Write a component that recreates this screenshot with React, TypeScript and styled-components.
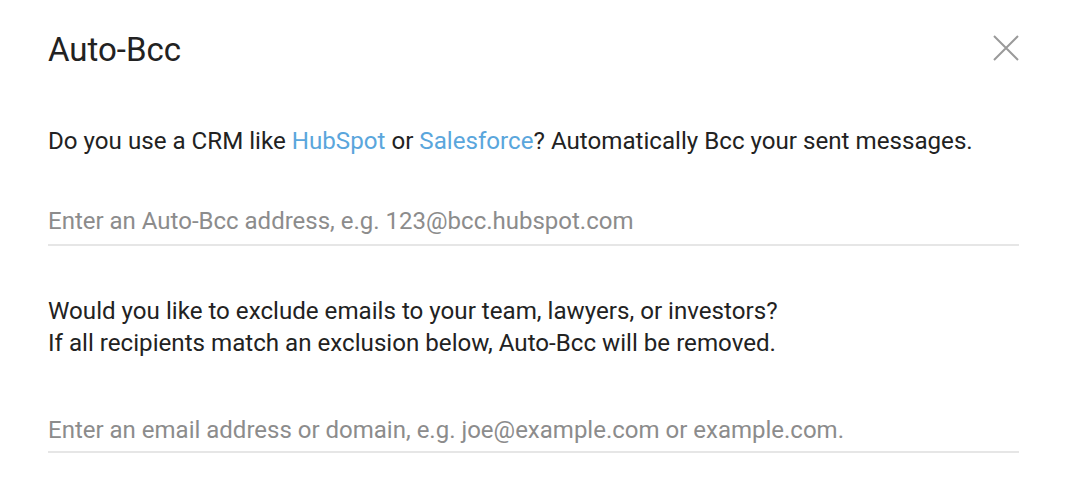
import React from "react";
import styled, { createGlobalStyle } from "styled-components";

const Global = createGlobalStyle`
  html, body { margin: 0; padding: 0; background: #ffffff; }
  body { font-family: Roboto, "Noto Sans", Arial, sans-serif; -webkit-font-smoothing: antialiased; }
  * { box-sizing: border-box; }
`;

const Dialog = styled.div`
  width: 1068px;
  height: 480px;
  padding: 28px 49px 0 48px;
  background: #fff;
  display: flex;
  flex-direction: column;
`;

const Header = styled.div`
  display: flex;
  align-items: flex-start;
  justify-content: space-between;
  height: 44px;
`;

const Title = styled.h1`
  margin: 0;
  font-size: 33px;
  font-weight: 400;
  color: #222;
  line-height: 44px;
`;

const CloseButton = styled.button`
  border: 0;
  background: transparent;
  padding: 0;
  margin-top: 7px;
  width: 26px;
  height: 26px;
  display: flex;
  align-items: center;
  justify-content: center;
  cursor: pointer;
`;

const Paragraph = styled.p<{ $top: number; $lh: number }>`
  margin: ${(p) => p.$top}px 0 0 0;
  font-size: 24.15px;
  line-height: ${(p) => p.$lh}px;
  color: #222;
`;

const Link = styled.a`
  color: #5aa6dc;
  text-decoration: none;
`;

const Field = styled.input<{ $top: number; $pb: number }>`
  margin-top: ${(p) => p.$top}px;
  width: 100%;
  border: 0;
  border-bottom: 2px solid #e6e6e6;
  padding: 0 0 ${(p) => p.$pb}px 0;
  font-family: inherit;
  font-size: 24px;
  line-height: 30px;
  height: ${(p) => 32 + p.$pb}px;
  color: #222;
  outline: none;
  background: transparent;
  &::placeholder { color: #8c8c8c; }
`;

export default function App() {
  return (
    <>
      <Global />
      <Dialog>
        <Header>
          <Title>Auto-Bcc</Title>
          <CloseButton aria-label="Close">
            <svg width="26" height="26" viewBox="0 0 26 26">
              <path d="M1 1 L25 25 M25 1 L1 25" stroke="#9a9a9a" strokeWidth="2" fill="none" />
            </svg>
          </CloseButton>
        </Header>
        <Paragraph $top={54} $lh={31}>
          Do you use a CRM like <Link href="#">HubSpot</Link> or <Link href="#">Salesforce</Link>? Automatically Bcc your sent messages.
        </Paragraph>
        <Field $top={49} $pb={8} placeholder="Enter an Auto-Bcc address, e.g. 123@bcc.hubspot.com" />
        <Paragraph $top={49} $lh={32}>
          Would you like to exclude emails to your team, lawyers, or investors?
          <br />
          If all recipients match an exclusion below, Auto-Bcc will be removed.
        </Paragraph>
        <Field $top={56} $pb={6} placeholder="Enter an email address or domain, e.g. joe@example.com or example.com." />
      </Dialog>
    </>
  );
}
